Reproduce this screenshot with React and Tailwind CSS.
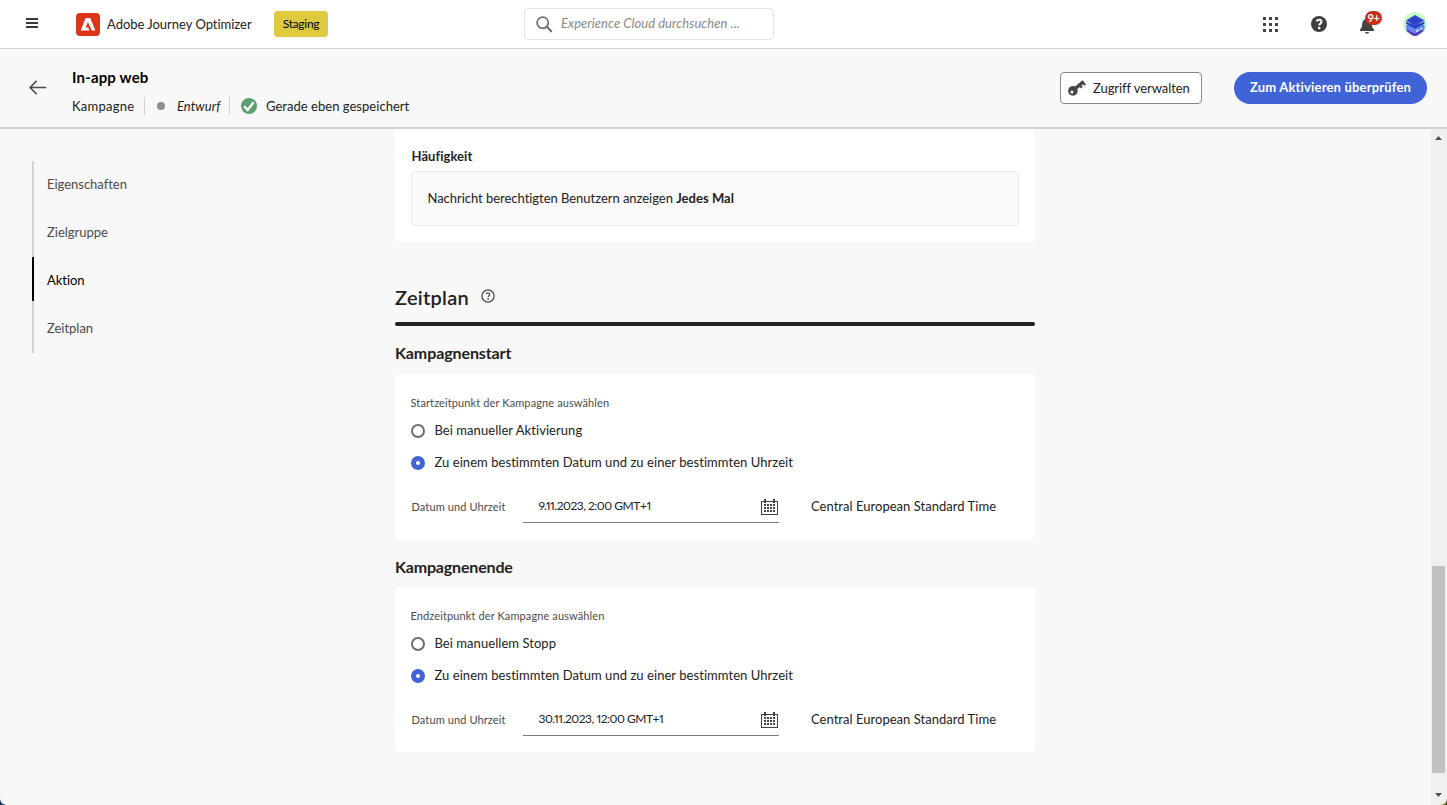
function MenuIcon() {
  return (
    <svg width="12" height="10" viewBox="0 0 12 10" fill="#3a3a3a" shapeRendering="crispEdges">
      <rect width="12" height="2" />
      <rect y="4" width="12" height="2" />
      <rect y="8" width="12" height="2" />
    </svg>
  );
}

function AdobeLogo() {
  return (
    <svg width="24" height="23" viewBox="0 0 24 23">
      <rect width="24" height="23" rx="4" fill="#dc3519" />
      <path fill="#fff" d="M9.600 5h4.700l5 12.500h-3.600L11.900 8.900 9.600 14.400h2.600l1.100 3.100H4.700z" />
    </svg>
  );
}

function SearchIcon() {
  return (
    <svg width="17" height="17" viewBox="0 0 17 17" fill="none" stroke="#6e6e6e">
      <circle cx="6.7" cy="6.7" r="5.6" strokeWidth="1.7" />
      <path d="M10.8 10.8 15.3 15.3" strokeWidth="2" strokeLinecap="round" />
    </svg>
  );
}

function AppsIcon() {
  const steps = [0, 6, 12];
  return (
    <svg width="15" height="15" viewBox="0 0 15 15" fill="#444" shapeRendering="crispEdges">
      {steps.map((y) => steps.map((x) => <rect key={`${x}-${y}`} x={x} y={y} width="3" height="3" />))}
    </svg>
  );
}

function HelpIcon() {
  return (
    <svg width="16" height="16" viewBox="0 0 16 16">
      <circle cx="8" cy="8" r="8" fill="#3f3f3f" />
      <path d="M5.6 5.4C6.1 4.3 7 3.8 8.1 3.8c1.5 0 2.4.8 2.4 2 0 1.6-2.2 1.8-2.2 3.6" fill="none" stroke="#fff" strokeWidth="2.1" />
      <circle cx="8.2" cy="12" r="1.3" fill="#fff" />
    </svg>
  );
}

function BellIcon() {
  return (
    <svg width="14" height="17" viewBox="0 0 14 17" fill="#444">
      <path d="M5.500 1.500a1.500 1.500 0 0 1 3 0v.7c2.200.7 3.300 2.600 3.300 4.800 0 2.800.7 4 2 5.200.3.300.2 1.800-.3 1.800H.5c-.5 0-.6-1.500-.3-1.800 1.300-1.200 2-2.400 2-5.200 0-2.200 1.100-4.100 3.300-4.800z" />
      <path d="M5 15h4a2 1.700 0 0 1-4 0z" />
    </svg>
  );
}

function Avatar() {
  return (
    <svg width="24" height="24" viewBox="0 0 24 24">
      <circle cx="12" cy="12" r="12" fill="#c9fbc4" />
      <path d="M3.500 17.500 12 13l8.500 4.500V19l-6 4.500c-1.500.700-3.500.600-5 0l-6-4.500z" fill="#5b35c4" />
      <path d="M3 13 12 9.500l9.500 3.500v3.700L12 21.500l-9-4.800z" fill="#4f86f5" />
      <path d="M3 13l9 4.500v4l-9-4.800z" fill="#6c86f7" />
      <path d="M3 9.500l9 4.700 9.500-4.700v2L12 16.400l-9-4.900z" fill="#2a36b4" />
      <path d="M12 3 21.500 8.600 12 14 3 8.600z" fill="#3247cf" />
      <path d="M8.500 7 13 9.800M11.500 9.600 15 7.500" stroke="#2334a5" strokeWidth="1" />
      <path d="m13 18.300 3-1.300v2l-3 1.200zM17 16.500l2.500-1.200v1.700L17 18z" fill="#cfd8ff" />
    </svg>
  );
}

function BackIcon() {
  return (
    <svg width="18" height="15" viewBox="0 0 18 15" fill="none" stroke="#4b4b4b" strokeWidth="1.5">
      <path d="M17.200 7.500H1.200M7.600.900 1.100 7.500l6.500 6.600" />
    </svg>
  );
}

function SavedIcon() {
  return (
    <svg width="16" height="16" viewBox="0 0 16 16">
      <circle cx="8" cy="8" r="8" fill="#5aa06f" />
      <path d="m3.200 8.200 3.400 3.800 6-7.800" fill="none" stroke="#fff" strokeWidth="2.300" />
    </svg>
  );
}

function KeyIcon() {
  return (
    <svg width="18" height="16" viewBox="0 0 18 16">
      <path d="M6.500 9.200 15.500 1.600" stroke="#464646" strokeWidth="3.400" />
      <path d="m11.200 4.500 2.700 3.200M14.500 2l2.600 3.100" stroke="#464646" strokeWidth="2.200" />
      <circle cx="4.900" cy="10.900" r="4.800" fill="#464646" />
      <circle cx="3.900" cy="12" r="1.500" fill="#fff" />
    </svg>
  );
}

function InfoIcon() {
  return (
    <svg width="14" height="14" viewBox="0 0 14 14" fill="none" stroke="#4b4b4b">
      <circle cx="7" cy="7" r="6.100" strokeWidth="1.300" />
      <path d="M5.200 4.900c.400-.700 1-1 1.800-1 1 0 1.700.600 1.700 1.500 0 1.200-1.500 1.300-1.500 2.700" strokeWidth="1.300" />
      <circle cx="7.100" cy="9.900" r=".85" fill="#4b4b4b" stroke="none" />
    </svg>
  );
}

function CalendarIcon() {
  const cols = [3, 6, 9, 12];
  const rows = [5, 8, 11];
  return (
    <svg width="17" height="16" viewBox="0 0 17 16" fill="#444" shapeRendering="crispEdges">
      <path fillRule="evenodd" d="M0 2h17v14H0zM1 3v12h15V3z" />
      <rect x="3" y="0" width="2" height="4" />
      <rect x="12" y="0" width="2" height="4" />
      {rows.map((y) => cols.map((x) => <rect key={`${x}-${y}`} x={x} y={y} width="2" height="2" />))}
    </svg>
  );
}

function TopBar() {
  return (
    <header className="flex h-[49px] shrink-0 items-center border-b border-[#d3d5d3] bg-white pr-5 pl-[26px]">
      <div className="-mt-[3px]">
        <MenuIcon />
      </div>
      <div className="ml-[38px]">
        <AdobeLogo />
      </div>
      <span className="mt-0.5 ml-[7px] w-[167px] text-[13px] tracking-[-0.02px]">Adobe Journey Optimizer</span>
      <span className="flex h-[26px] w-[54px] items-center justify-center rounded bg-[#dfc93f] text-xs tracking-[-0.3px] text-black">
        Staging
      </span>
      <div className="ml-[196px] flex h-8 w-[250px] items-center rounded border border-[#e3e3e3] pl-[11px] text-[#8a8a8a]">
        <SearchIcon />
        <span className="ml-2 text-[13px] tracking-[0.05px] italic">Experience Cloud durchsuchen ...</span>
      </div>
      <div className="ml-auto flex items-center">
        <AppsIcon />
        <div className="ml-[33px]">
          <HelpIcon />
        </div>
        <div className="relative mt-0.5 ml-[33px]">
          <BellIcon />
          <span className="absolute -top-[6px] left-[5px] flex h-3.5 w-[17px] items-center justify-center rounded-full bg-[#cc2e16] text-[11px] leading-none font-bold tracking-[-0.5px] text-white">
            9+
          </span>
        </div>
        <div className="ml-[29px]">
          <Avatar />
        </div>
      </div>
    </header>
  );
}

function CampaignBar() {
  return (
    <div className="flex h-20 shrink-0 items-start border-b-2 border-[#d3d3d3] pr-5 pl-[29px]">
      <div className="mt-[31px]">
        <BackIcon />
      </div>
      <div className="ml-[25px] flex flex-col">
        <h1 className="mt-[18px] text-[15px] leading-5 font-bold tracking-[0.17px] text-black">In-app web</h1>
        <div className="mt-2.5 flex h-[18px] items-center text-[13px]">
          <span className="mt-0.5 w-[72px] tracking-[0.26px]">Kampagne</span>
          <span className="h-[18px] w-px bg-[#d0d0d0]" />
          <span className="ml-3 h-2 w-2 rounded-full bg-[#8e8e8e]" />
          <span className="mt-0.5 ml-3 w-[52px] tracking-[0.05px] italic">Entwurf</span>
          <span className="h-[18px] w-px bg-[#d0d0d0]" />
          <span className="ml-[11px]">
            <SavedIcon />
          </span>
          <span className="mt-0.5 ml-[9px] tracking-[0.03px]">Gerade eben gespeichert</span>
        </div>
      </div>
      <button className="mt-[23px] ml-auto flex h-8 w-[142px] items-center rounded border border-[#8a8a8a] bg-white pl-[7px] text-[13px]">
        <KeyIcon />
        <span className="mt-0.5 ml-[7px] tracking-[-0.06px]">Zugriff verwalten</span>
      </button>
      <button className="mt-[23px] ml-8 flex h-8 w-[193px] items-center justify-center rounded-full bg-[#4064d7] text-[13px] font-bold tracking-[0.18px] text-white">
        Zum Aktivieren überprüfen
      </button>
    </div>
  );
}

const sections = ["Eigenschaften", "Zielgruppe", "Aktion", "Zeitplan"];

function SideNav() {
  return (
    <nav className="mt-8 ml-8 flex h-48 w-[363px] shrink-0 flex-col text-[13px]">
      {sections.map((name) =>
        name === "Aktion" ? (
          <div key={name} className="flex h-12 flex-col border-l-2 border-[#d3d3d3]">
            <div className="-ml-0.5 flex h-11 items-center border-l-2 border-black pt-1 pl-[13px] tracking-[-0.05px] text-black">
              {name}
            </div>
          </div>
        ) : (
          <div key={name} className="flex h-12 items-center border-l-2 border-[#d3d3d3] pl-[13px] tracking-[-0.02px] text-[#4b4b4b]">
            {name}
          </div>
        )
      )}
    </nav>
  );
}

function Radio({ checked, label }) {
  return (
    <div className="flex h-8 items-center">
      <span
        className={
          checked
            ? "flex h-3.5 w-3.5 items-center justify-center rounded-full bg-[#4064d7]"
            : "h-3.5 w-3.5 rounded-full border-2 border-[#6e6e6e] bg-white"
        }
      >
        {checked && <span className="h-1 w-1 rounded-full bg-white" />}
      </span>
      <span className="-mt-px ml-[9.5px] text-[13px] tracking-[0.055px]">{label}</span>
    </div>
  );
}

function TimeCard({ legend, manual, date }) {
  return (
    <section className="h-[165px] w-[640px] rounded bg-white px-4 pt-[21px]">
      <p className="-ml-[0.5px] h-4 text-[11px] leading-4 tracking-[0.11px] text-[#4b4b4b]">{legend}</p>
      <div className="mt-1">
        <Radio label={manual} />
        <Radio checked label="Zu einem bestimmten Datum und zu einer bestimmten Uhrzeit" />
      </div>
      <div className="mt-[11px] flex h-8 items-center">
        <span className="mt-0.5 w-28 pl-[0.5px] text-[11px] tracking-[0.11px] text-[#4b4b4b]">Datum und Uhrzeit</span>
        <div className="flex h-[33px] w-64 items-center justify-between border-b border-[#7b7b7b] pl-[15.5px]">
          <span className="text-xs tracking-[-0.47px] proportional-nums">{date}</span>
          <span className="mt-0.5 mr-px">
            <CalendarIcon />
          </span>
        </div>
        <span className="mt-0.5 ml-8 text-[13px] tracking-[0.03px]">Central European Standard Time</span>
      </div>
    </section>
  );
}

function ScrollBar() {
  return (
    <div className="ml-auto flex w-[17px] shrink-0 flex-col items-center bg-[#f0f0f0]">
      <svg className="mt-[7px]" width="7" height="4" viewBox="0 0 7 4">
        <path d="M0 4 3.500 0 7 4z" fill="#505050" />
      </svg>
      <div className="mt-[426px] h-[207px] w-[13px] bg-[#c1c1c1]" />
      <svg className="mt-5" width="7" height="4" viewBox="0 0 7 4">
        <path d="M0 0h7L3.500 4z" fill="#505050" />
      </svg>
    </div>
  );
}

export default function App() {
  return (
    <div className="relative flex h-[805px] w-[1447px] flex-col overflow-hidden bg-[#f8f8f8] font-[Lato,'Noto_Sans',sans-serif] whitespace-nowrap text-[#222]">
      <TopBar />
      <CampaignBar />
      <div className="flex min-h-0 flex-1">
        <SideNav />
        <main className="w-[640px]">
          <section className="h-[113px] rounded-b bg-white px-4 pt-[18px]">
            <h3 className="pl-[0.5px] text-[13px] leading-[18px] font-bold tracking-[0.05px]">Häufigkeit</h3>
            <div className="mt-1.5 flex h-[55px] items-center rounded border border-[#ebebeb] bg-[#fafafa] pl-[15.5px] text-[13px]">
              <p className="tracking-[-0.035px]">
                Nachricht berechtigten Benutzern anzeigen <b className="tracking-[0.04px]">Jedes Mal</b>
              </p>
            </div>
          </section>
          <div className="mt-[41px] flex h-[39px]">
            <h2 className="w-[86px] text-[20px] leading-7 font-semibold tracking-[0.25px]">Zeitplan</h2>
            <span className="mt-1.5">
              <InfoIcon />
            </span>
          </div>
          <div className="h-1 rounded-full bg-[#222]" />
          <h3 className="mt-[17px] h-[31px] text-base leading-5 font-bold tracking-[-0.1px]">Kampagnenstart</h3>
          <TimeCard
            legend="Startzeitpunkt der Kampagne auswählen"
            manual="Bei manueller Aktivierung"
            date="9.11.2023, 2:00 GMT+1"
          />
          <h3 className="mt-[18px] h-[30px] text-base leading-5 font-bold tracking-[-0.17px]">Kampagnenende</h3>
          <TimeCard
            legend="Endzeitpunkt der Kampagne auswählen"
            manual="Bei manuellem Stopp"
            date="30.11.2023, 12:00 GMT+1"
          />
        </main>
        <ScrollBar />
      </div>
      <svg className="absolute bottom-0 left-0" width="6" height="6" viewBox="0 0 6 6">
        <path d="M0 0c.5 3.500 2.500 5.500 6 6H0z" fill="#0d3a66" />
      </svg>
      <svg className="absolute right-0 bottom-0" width="6" height="6" viewBox="0 0 6 6">
        <path d="M6 0C5.500 3.500 3.500 5.500 0 6h6z" fill="#6b6420" />
      </svg>
    </div>
  );
}
